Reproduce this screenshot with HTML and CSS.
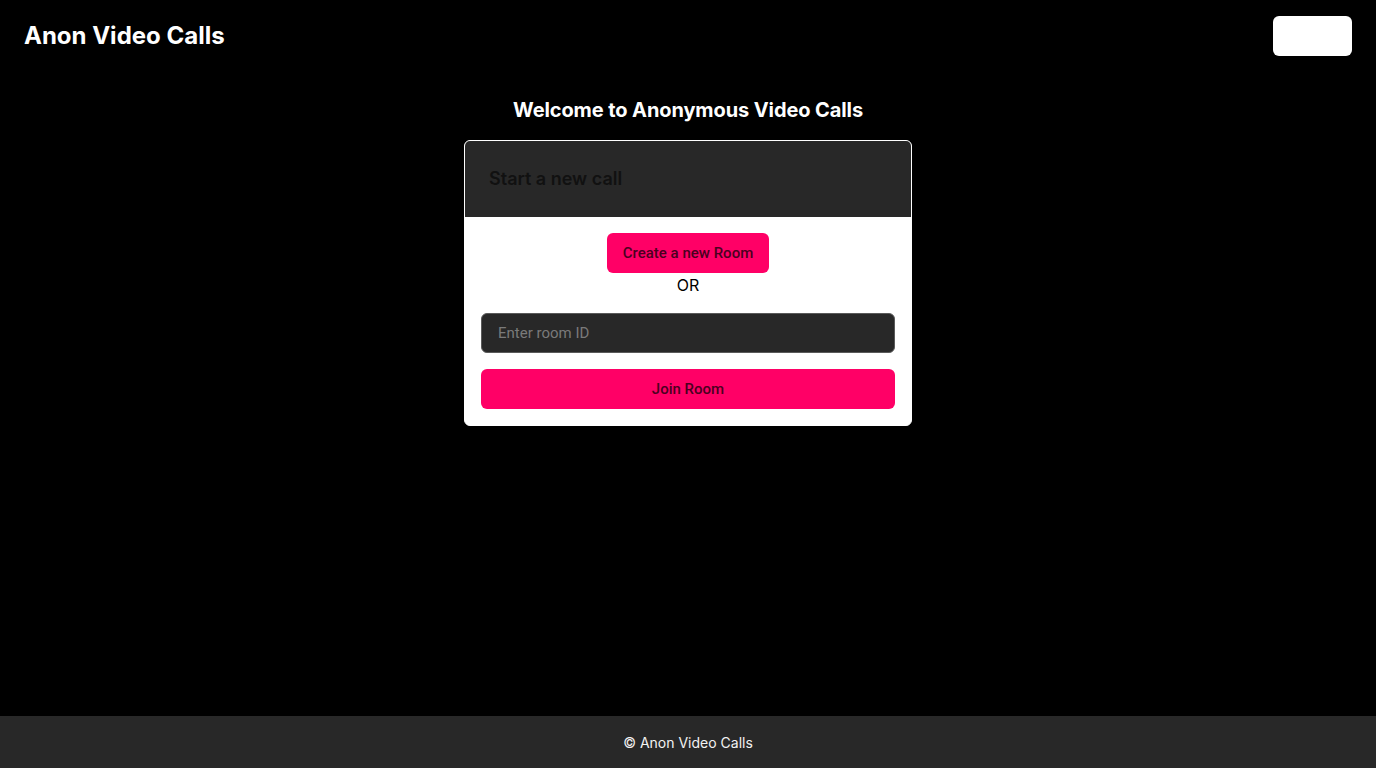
FILE: index.html
```html
<!DOCTYPE html>
<html lang="en">
<head>
<meta charset="utf-8">
<title>Anon Video Calls</title>
<link rel="stylesheet" href="styles.css">
</head>
<body>
<header class="topbar">
  <div class="brand">Anon Video Calls</div>
  <button class="top-btn" type="button"></button>
</header>
<main class="main">
  <h1 class="welcome">Welcome to Anonymous Video Calls</h1>
  <section class="card">
    <div class="card-head">Start a new call</div>
    <div class="card-body">
      <button class="btn btn-create" type="button">Create a new Room</button>
      <div class="or">OR</div>
      <input class="room-input" type="text" placeholder="Enter room ID">
      <button class="btn btn-join" type="button">Join Room</button>
    </div>
  </section>
</main>
<footer class="footer">© Anon Video Calls</footer>
</body>
</html>
```

FILE: styles.css
```css
* { box-sizing: border-box; }
html, body { margin: 0; padding: 0; }
body {
  background: #000;
  color: #fff;
  font-family: Inter, "Noto Sans", sans-serif;
  min-height: 100vh;
  display: flex;
  flex-direction: column;
}
.topbar {
  height: 72px;
  padding: 16px 24px;
  display: flex;
  align-items: center;
  justify-content: space-between;
}
.brand {
  font-size: 24px;
  font-weight: 700;
  line-height: 32px;
}
.top-btn {
  width: 79px;
  height: 40px;
  background: #fff;
  border: none;
  border-radius: 6px;
}
.main {
  flex: 1;
  display: flex;
  flex-direction: column;
  align-items: center;
  padding-top: 24px;
}
.welcome {
  margin: 0 0 16px;
  font-size: 20px;
  font-weight: 700;
  line-height: 28px;
  letter-spacing: -0.1px;
}
.card {
  width: 448px;
  background: #fff;
  border: 1px solid #fff;
  border-radius: 6px;
  overflow: hidden;
}
.card-head {
  background: #282828;
  color: #111;
  font-size: 18px;
  font-weight: 600;
  line-height: 28px;
  padding: 24px;
}
.card-body {
  padding: 16px;
  display: flex;
  flex-direction: column;
  align-items: center;
}
.btn {
  height: 40px;
  background: #ff0066;
  border: none;
  border-radius: 6px;
  font-family: Roboto, "Liberation Sans", sans-serif;
  font-size: 15px;
  font-weight: 500;
  color: #4a0020;
}
.btn-create {
  width: 162px;
}
.or {
  color: #000;
  font-size: 16px;
  line-height: 24px;
  margin-bottom: 16px;
}
.room-input {
  width: 100%;
  height: 40px;
  background: #282828;
  border: 1px solid #5a5a5a;
  border-radius: 6px;
  padding: 0 16px;
  font-family: Roboto, "Liberation Sans", sans-serif;
  font-size: 15px;
  color: #fff;
  margin-bottom: 16px;
}
.room-input::placeholder { color: #7a7a7a; }
.btn-join {
  width: 100%;
}
.footer {
  height: 52px;
  background: #282828;
  display: flex;
  align-items: center;
  justify-content: center;
  font-size: 14px;
  color: #f2f2f2;
}
```
